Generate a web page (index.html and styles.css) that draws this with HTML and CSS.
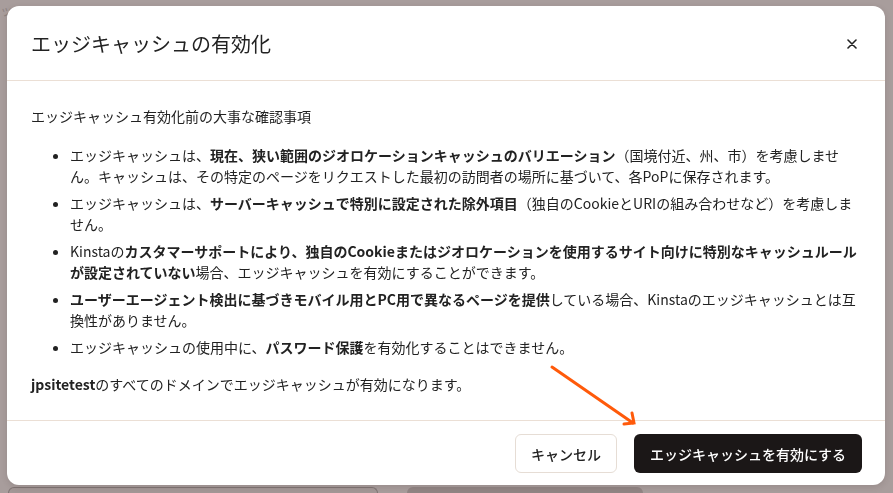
FILE: index.html
```html
<!DOCTYPE html>
<html lang="ja">
<head>
<meta charset="utf-8">
<title>エッジキャッシュの有効化</title>
<link rel="stylesheet" href="styles.css">
</head>
<body>
<div class="page">
  <div class="page-top">ッ</div>
  <div class="page-row">
    <div class="page-card"></div>
    <div class="page-card dark"></div>
  </div>
</div>

<div class="overlay">
  <div class="modal" role="dialog">
    <header class="modal-header">
      <h2 class="modal-title">エッジキャッシュの有効化</h2>
      <button class="close-btn" aria-label="閉じる">
        <svg width="10" height="10" viewBox="0 0 10 10"><path d="M1 1L9 9M9 1L1 9" stroke="#222" stroke-width="1.6" stroke-linecap="round"/></svg>
      </button>
    </header>
    <div class="modal-body">
      <p class="intro">エッジキャッシュ有効化前の大事な確認事項</p>
      <ul class="notes">
        <li>エッジキャッシュは、<b>現在、狭い範囲のジオロケーションキャッシュのバリエーション</b>（国境付近、州、市）を考慮しません。キャッシュは、その特定のページをリクエストした最初の訪問者の場所に基づいて、各PoPに保存されます。</li>
        <li>エッジキャッシュは、<b>サーバーキャッシュで特別に設定された除外項目</b>（独自のCookieとURIの組み合わせなど）を考慮しません。</li>
        <li>Kinstaの<b>カスタマーサポートにより、独自のCookieまたはジオロケーションを使用するサイト向けに特別なキャッシュルールが設定されていない</b>場合、エッジキャッシュを有効にすることができます。</li>
        <li><b>ユーザーエージェント検出に基づきモバイル用とPC用で異なるページを提供</b>している場合、Kinstaのエッジキャッシュとは互換性がありません。</li>
        <li>エッジキャッシュの使用中に、<b>パスワード保護</b>を有効化することはできません。</li>
      </ul>
      <p class="outro"><b>jpsitetest</b>のすべてのドメインでエッジキャッシュが有効になります。</p>
    </div>
    <footer class="modal-footer">
      <button class="btn btn-secondary">キャンセル</button>
      <button class="btn btn-primary">エッジキャッシュを有効にする</button>
    </footer>
  </div>
</div>

<svg class="annotation" width="893" height="493" viewBox="0 0 893 493">
  <g stroke="#ff5a0a" stroke-width="3" stroke-linecap="round" fill="none">
    <path d="M552 367L633 423"/>
    <path d="M624 424L634 423L632 413"/>
  </g>
</svg>
</body>
</html>
```

FILE: styles.css
```css
* { box-sizing: border-box; }

html, body {
  margin: 0;
  height: 100%;
}

body {
  background: #a89d9c;
  font-family: "Noto Sans CJK JP", "Noto Sans", sans-serif;
  color: #222;
  overflow: hidden;
}

.page {
  height: 100%;
  display: flex;
  flex-direction: column;
  justify-content: space-between;
}

.page-top {
  font-size: 13px;
  color: #8e8382;
  padding: 2px 0 0 0;
  line-height: 16px;
}

.page-row {
  display: flex;
  gap: 29px;
  padding-left: 8px;
  height: 6px;
}

.page-card {
  width: 370px;
  border: 1px solid #7f7473;
  border-bottom: none;
  border-radius: 6px 6px 0 0;
  background: #a39796;
}

.page-card.dark {
  width: 236px;
  border: none;
  background: #918584;
}

.overlay {
  position: fixed;
  inset: 0;
  padding: 6px 8px 8px 7px;
  display: flex;
}

.modal {
  flex: 1;
  background: #fff;
  border-radius: 12px;
  display: flex;
  flex-direction: column;
  box-shadow: 0 2px 6px rgba(60, 40, 40, 0.15);
}

.modal-header {
  display: flex;
  align-items: center;
  justify-content: space-between;
  padding: 24px 23px 23px 24px;
  border-bottom: 1px solid #ebdfd5;
}

.modal-title {
  margin: 0;
  font-size: 20px;
  line-height: 27px;
  font-weight: 400;
  color: #222;
}

.close-btn {
  width: 20px;
  height: 20px;
  padding: 0;
  border: none;
  background: none;
  display: flex;
  align-items: center;
  justify-content: center;
}

.modal-body {
  flex: 1;
  padding: 25px 24px 24px 24px;
  font-size: 14px;
  line-height: 21px;
}

.modal-body p {
  margin: 0;
}

.modal-body b {
  font-weight: 700;
}

.notes {
  margin: 18px 0 0 0;
  padding-left: 39px;
}

.notes li + li {
  margin-top: 6px;
}

.modal-body .outro {
  margin-top: 16px;
}

.modal-footer {
  display: flex;
  justify-content: flex-end;
  gap: 17px;
  padding: 13px 23px 12px 24px;
  border-top: 1px solid #ebdfd5;
}

.btn {
  height: 39px;
  padding: 0 12px;
  border-radius: 6px;
  font-family: inherit;
  font-size: 14px;
  font-weight: 500;
  line-height: 20px;
  white-space: nowrap;
  display: flex;
  align-items: center;
  justify-content: center;
}

.btn-secondary {
  width: 102px;
  background: #fff;
  color: #222;
  border: 1px solid #e6ddd5;
}

.btn-primary {
  width: 228px;
  background: #1b1717;
  color: #fff;
  border: none;
}

.annotation {
  position: fixed;
  left: 0;
  top: 0;
  pointer-events: none;
}
```
